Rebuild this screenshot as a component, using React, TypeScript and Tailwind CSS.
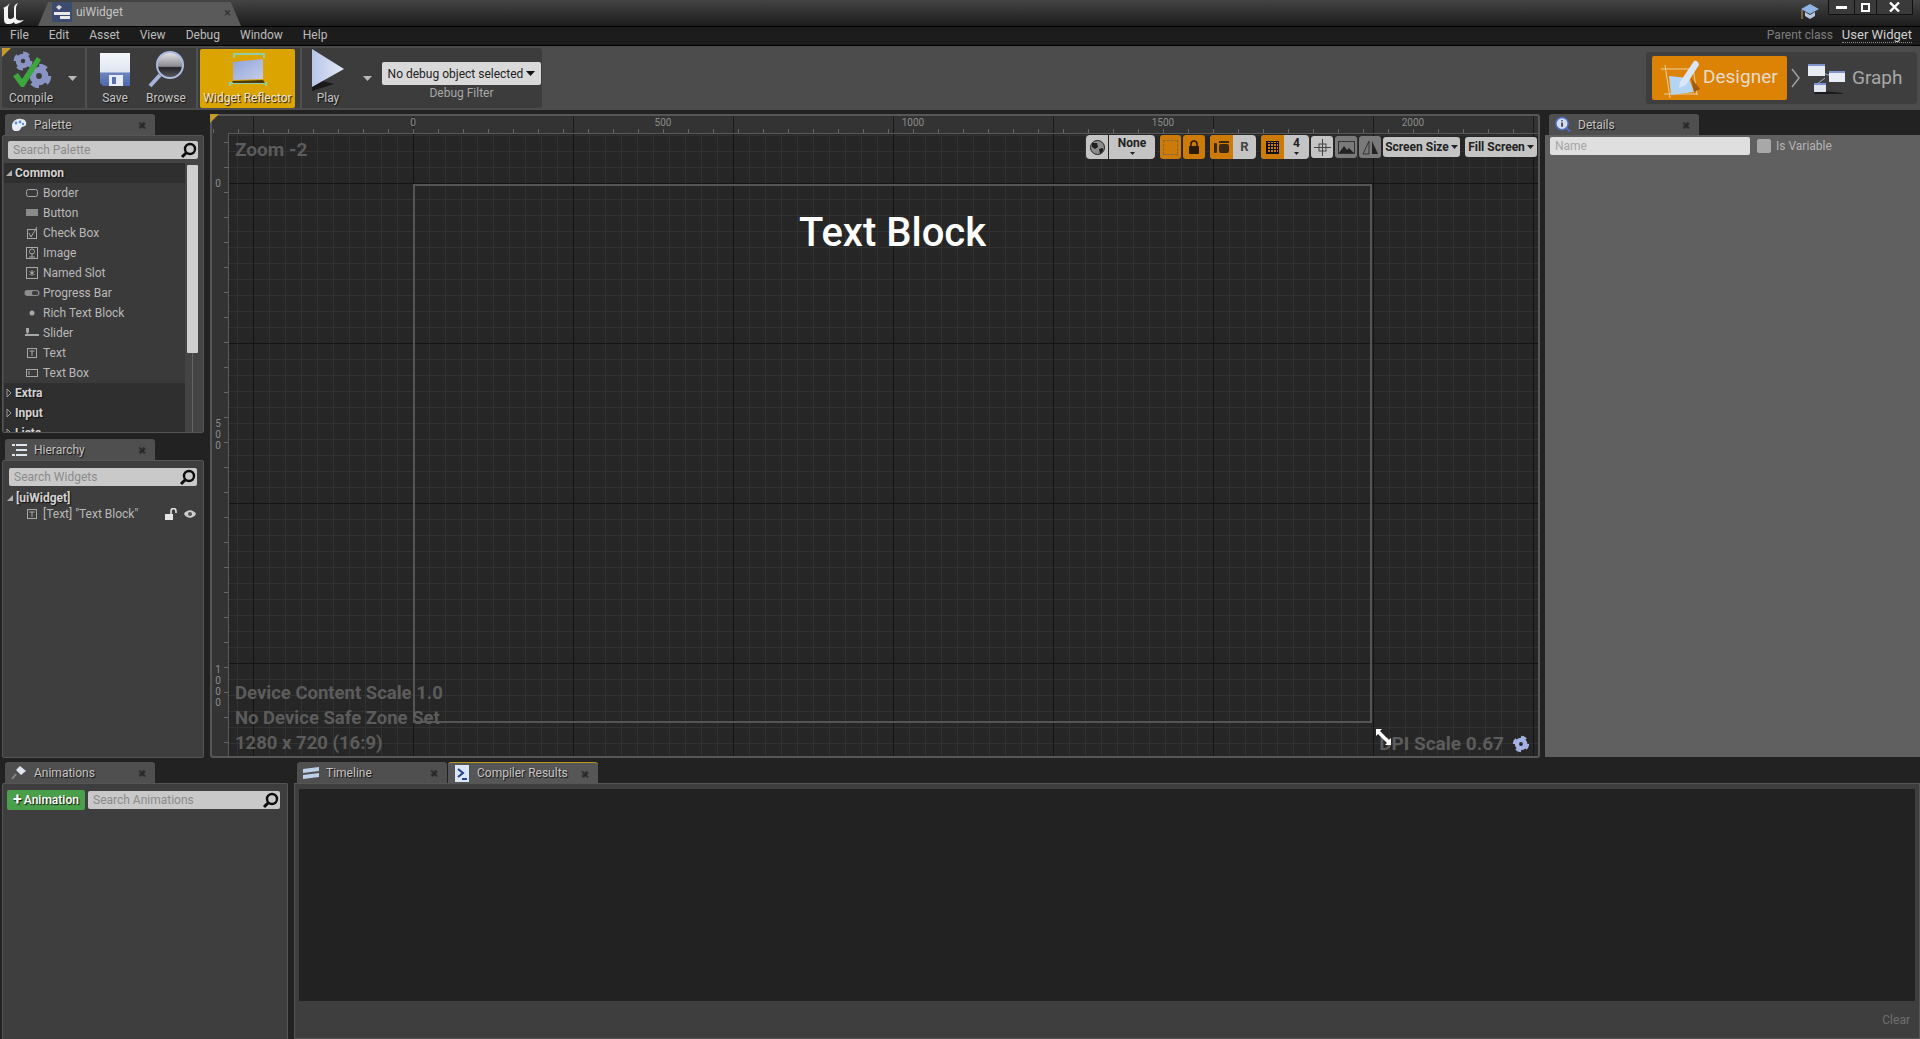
import type { ReactNode } from 'react';

const SHADOW = '[text-shadow:1px_1px_1px_#111]';

function Close() {
  return <span className="ml-auto mr-[10px] text-[13px] leading-none text-[#2e2e2e]">×</span>;
}

function Gear({ x, y, r, color }: { x: number; y: number; r: number; color: string }) {
  return (
    <g>
      <circle cx={x} cy={y} r={r * 0.68} fill="none" stroke={color} strokeWidth={r * 0.72} />
      <circle cx={x} cy={y} r={r * 1.15} fill="none" stroke={color} strokeWidth={r * 0.42} strokeDasharray={`${r * 0.9} ${r * 0.9}`} />
    </g>
  );
}

function UnrealLogo() {
  return (
    <svg width="24" height="23" viewBox="0 0 24 23">
      <path d="M1 6c3-1 5-3 7-5-1 2-2 3-2 5v9c0 2 3 3 5 1l1-1V6c0-2 1-4 4-5-1 2-2 3-2 5v10c0 2 3 3 8 2-2 2-5 3-8 4-1 0-2-1-2-2-2 2-4 2-6 2-3 0-4-2-4-5V8C2 7 2 6 1 6z" fill="#f4f4f4" />
    </svg>
  );
}

function Search({ className = '' }: { className?: string }) {
  return (
    <svg width="17" height="17" viewBox="0 0 17 17" className={className}>
      <circle cx="10" cy="7" r="5" fill="none" stroke="#0c0c0c" strokeWidth="2.4" />
      <path d="M6 11l-4 4" stroke="#0c0c0c" strokeWidth="3" />
    </svg>
  );
}

function SearchBox({ placeholder, className }: { placeholder: string; className: string }) {
  return (
    <div className={`flex h-[18px] items-center justify-between rounded-[2px] bg-[#c9c9c9] pl-[5px] pr-[1px] text-[12px] text-[#8b8b8b] ${className}`}>
      <span>{placeholder}</span>
      <Search />
    </div>
  );
}

function Tab({ label, icon, className = '', active = false }: { label: string; icon: ReactNode; className?: string; active?: boolean }) {
  return (
    <div className={`flex h-[21px] w-[150px] shrink-0 items-center rounded-t-[3px] bg-[#4f4f4f] pl-[6px] text-[12px] text-[#c4c4c4] ${SHADOW} ${active ? 'border-t border-[#b8951f]' : ''} ${className}`}>
      <span className="mr-[7px] flex w-[16px] justify-center">{icon}</span>
      {label}
      <Close />
    </div>
  );
}

function TreeHeader({ label, open = false }: { label: string; open?: boolean }) {
  return (
    <div className={`flex h-[20px] items-center bg-[#2f2f2f] pl-[1px] text-[12px] font-bold text-[#d2d2d2] ${SHADOW}`}>
      {open ? (
        <svg width="8" height="8" viewBox="0 0 8 8" className="mr-[2px]"><path d="M7 1v6H1z" fill="#b0b0b0" /></svg>
      ) : (
        <svg width="8" height="10" viewBox="0 0 8 10" className="mr-[2px]"><path d="M2 1l4 4-4 4z" fill="none" stroke="#999" /></svg>
      )}
      {label}
    </div>
  );
}

const stroke = { fill: 'none', stroke: '#a8a8a8', strokeWidth: 1 };
const paletteItems: { label: string; icon: ReactNode }[] = [
  { label: 'Border', icon: <rect x="2.5" y="4.5" width="11" height="7" rx="2" {...stroke} /> },
  { label: 'Button', icon: <rect x="2" y="4" width="12" height="7" fill="#8a8a8a" /> },
  { label: 'Check Box', icon: <g {...stroke}><rect x="3.5" y="4.5" width="9" height="9" /><path d="M5 8l2 4 6-10" /></g> },
  { label: 'Image', icon: <g {...stroke}><rect x="2.5" y="2.5" width="11" height="11" /><circle cx="8" cy="6.5" r="2.5" /><path d="M8 9v3M5 12h6" /></g> },
  { label: 'Named Slot', icon: <g {...stroke}><rect x="2.5" y="2.5" width="11" height="11" /><path d="M8 5v6M5.5 6.5l5 3M10.5 6.5l-5 3" /></g> },
  { label: 'Progress Bar', icon: <g><rect x="0.5" y="5" width="15" height="6" rx="3" fill="#8c8c8c" /><rect x="8" y="6" width="6" height="4" rx="1.5" fill="#3c3c3c" /></g> },
  { label: 'Rich Text Block', icon: <circle cx="8" cy="8" r="2.5" fill="#a8a8a8" /> },
  { label: 'Slider', icon: <g fill="#a8a8a8"><rect x="1" y="9" width="14" height="2" /><path d="M2 3h3v4L3.5 9 2 7z" /></g> },
  { label: 'Text', icon: <g {...stroke}><rect x="3.5" y="3.5" width="9" height="9" /><path d="M5.5 6h5M8 6v5" /></g> },
  { label: 'Text Box', icon: <g {...stroke}><rect x="2.5" y="4.5" width="11" height="7" /><path d="M5 6v4" /></g> },
];

function PaletteRow({ label, icon }: { label: string; icon: ReactNode }) {
  return (
    <div className="flex h-[20px] items-center bg-[#3a3a3a] pl-[20px] text-[12px] text-[#b9b9b9]">
      <svg width="16" height="16" viewBox="0 0 16 16" className="mr-[3px] shrink-0">{icon}</svg>
      {label}
    </div>
  );
}

function PaletteIcon() {
  return (
    <svg width="16" height="15" viewBox="0 0 16 15">
      <path d="M1 9c0-5 5-8 9-7 4 0 6 3 5 6-1 2-4 1-5 3-1 3-3 3-5 3-3 0-4-2-4-5z" fill="#e6edf6" />
      <circle cx="5" cy="6" r="1.4" fill="#5e8fd8" /><circle cx="9" cy="5" r="1.4" fill="#5e8fd8" /><circle cx="12" cy="7" r="1.2" fill="#5e8fd8" />
    </svg>
  );
}

function ListIcon() {
  return (
    <svg width="16" height="14" viewBox="0 0 16 14" fill="#dfe5ee">
      <rect x="1" y="1" width="3" height="2" /><rect x="5" y="1" width="11" height="2" /><rect x="5" y="6" width="11" height="2" /><rect x="5" y="11" width="11" height="2" /><rect x="1" y="11" width="3" height="2" />
    </svg>
  );
}

function ToolButton({ label, icon, className = '' }: { label: string; icon: ReactNode; className?: string }) {
  return (
    <div className={`flex h-[59px] flex-col items-center justify-between pt-[2px] pb-[2px] text-[12px] text-[#c6c6c6] ${SHADOW} ${className}`}>
      <div className="flex h-[38px] items-center">{icon}</div>
      <span className="whitespace-nowrap">{label}</span>
    </div>
  );
}

function Caret({ className = '' }: { className?: string }) {
  return <svg width="9" height="5" viewBox="0 0 9 5" className={className}><path d="M0 0h9L4.5 5z" fill="currentColor" /></svg>;
}

function Sep() {
  return <div className="mx-[3px] h-[60px] w-[2px] shrink-0 bg-[#505050]" />;
}

function CompileIcon() {
  return (
    <svg width="42" height="40" viewBox="0 0 42 40">
      <Gear x={13} y={11} r={7} color="#8a94c4" />
      <Gear x={29} y={26} r={9} color="#8a94c4" />
      <path d="M3 26l5-3 4 6L27 7l4 3-17 27h-3z" fill="#3ea63e" />
    </svg>
  );
}

function SaveIcon() {
  return (
    <svg width="34" height="38" viewBox="0 0 34 38">
      <defs><linearGradient id="flop" x1="0" x2="0" y1="0" y2="1"><stop offset="0" stopColor="#f4f6fb" /><stop offset="0.58" stopColor="#dfe5f0" /><stop offset="0.6" stopColor="#6d84bf" /><stop offset="1" stopColor="#4f68ac" /></linearGradient></defs>
      <path d="M2 2h30v33H5l-3-3z" fill="url(#flop)" />
      <rect x="11" y="24" width="14" height="11" fill="#e8ecf4" /><rect x="14" y="26" width="4" height="7" fill="#5a70b0" />
    </svg>
  );
}

function BrowseIcon() {
  return (
    <svg width="38" height="40" viewBox="0 0 38 40">
      <defs><linearGradient id="lens" x1="0" x2="0" y1="0" y2="1"><stop offset="0" stopColor="#e6e6ea" /><stop offset="0.55" stopColor="#8c8c92" /><stop offset="0.6" stopColor="#26262a" /><stop offset="1" stopColor="#5a5a60" /></linearGradient></defs>
      <circle cx="23" cy="15" r="13" fill="url(#lens)" stroke="#aebbe0" strokeWidth="2" />
      <path d="M13 25L3 36" stroke="#a6b4dc" strokeWidth="4" />
    </svg>
  );
}

function ReflectorIcon() {
  return (
    <svg width="42" height="38" viewBox="0 0 42 38">
      <defs><linearGradient id="refl" x1="0" x2="1" y1="0" y2="1"><stop offset="0" stopColor="#8fa3dc" /><stop offset="1" stopColor="#c6cde8" /></linearGradient></defs>
      <path d="M7 7V3h30v4M3 35v-3h36v3" fill="none" stroke="#8fd0a4" strokeWidth="2" />
      <path d="M6 11l30-3v20l-30 1z" fill="url(#refl)" />
      <path d="M5 30l31-1 2 3H6z" fill="#4f3a0a" />
    </svg>
  );
}

function PlayIcon() {
  return (
    <svg width="36" height="44" viewBox="0 0 36 44">
      <defs><linearGradient id="play" x1="0" x2="1" y1="0" y2="0"><stop offset="0" stopColor="#b8c6e8" /><stop offset="1" stopColor="#e3e9f6" /></linearGradient></defs>
      <path d="M2 30l22 6-22 7z" fill="#1a1a1a" />
      <path d="M2 1l32 20L2 39z" fill="url(#play)" />
    </svg>
  );
}

function DesignerIcon() {
  return (
    <svg width="42" height="40" viewBox="0 0 42 40">
      <path d="M3 11h34M6 36h34M7 7l5 33M35 9l4 28" stroke="#e9cfa0" strokeWidth="1" fill="none" />
      <path d="M11 18l20 2 5 14-23 3z" fill="#b5d4f2" />
      <path d="M36 34l6-3-9-11z" fill="#9c5c08" />
      <path d="M22 24L36 3c2-1 5 1 5 4L28 27l-7 3z" fill="#d8e6f7" />
    </svg>
  );
}

function GraphIcon() {
  return (
    <svg width="40" height="32" viewBox="0 0 40 32">
      <path d="M8 8l16 6M10 22l8-6" stroke="#9db0da" />
      <path d="M6 28l30 3-1 1H8z" fill="#1b1b1b" />
      <rect x="1" y="2" width="17" height="12" fill="#e8ecf5" /><rect x="1" y="2" width="17" height="2" fill="#7e93d0" />
      <rect x="22" y="9" width="16" height="11" fill="#e8ecf5" /><rect x="22" y="9" width="16" height="2" fill="#7e93d0" />
      <rect x="7" y="21" width="12" height="9" fill="#dfe4f0" /><rect x="7" y="21" width="12" height="2" fill="#7e93d0" />
    </svg>
  );
}

function TitleBar() {
  return (
    <div className="flex h-[26px] items-end bg-[linear-gradient(#444444,#1c1c1c)]">
      <div className="ml-[1px] flex h-[26px] w-[37px] items-center pl-[1px]"><UnrealLogo /></div>
      <div className="flex h-[24px] w-[203px] items-center rounded-t-[6px] bg-[#5a5a5a] pb-[4px] pl-[14px] text-[12px] text-[#c4c4c4] [clip-path:polygon(5%_0,95%_0,100%_100%,0_100%)]">
        <svg width="20" height="20" viewBox="0 0 20 20" className="mr-[4px]">
          <rect width="20" height="20" fill="#3c4c70" /><rect x="2" y="10" width="16" height="3" fill="#e8e8e8" /><rect x="8" y="14" width="10" height="3" fill="#e8e8e8" /><path d="M4 5l3-2 3 2-3 3z" fill="#d8d8d8" />
        </svg>
        uiWidget
        <Close />
      </div>
      <div className="ml-auto flex h-[26px] items-start">
        <svg width="20" height="18" viewBox="0 0 20 18" className="mr-[8px] mt-[3px]">
          <path d="M1 6l9-5 9 5-9 5z" fill="#8fb4e4" /><path d="M5 9v4l5 3 5-3V9l-5 3z" fill="#b6c8e0" /><path d="M2 7v9" stroke="#c89a4e" />
        </svg>
        <div className="flex h-[15px] overflow-hidden rounded-b-[2px] border border-t-0 border-[#111]">
          <div className="flex w-[26px] items-center justify-center border-r border-[#111] bg-[#3a3a3a]"><span className="h-[3px] w-[11px] bg-white" /></div>
          <div className="flex w-[22px] items-center justify-center border-r border-[#111] bg-[#3a3a3a]"><span className="h-[9px] w-[9px] border-2 border-white" /></div>
          <div className="flex w-[35px] items-center justify-center bg-[#3a3a3a]">
            <svg width="11" height="10" viewBox="0 0 11 10"><path d="M1 0.5l9 9M10 0.5l-9 9" stroke="#fff" strokeWidth="2.4" /></svg>
          </div>
        </div>
        <div className="w-[7px]" />
      </div>
    </div>
  );
}

const MENU = ['File', 'Edit', 'Asset', 'View', 'Debug', 'Window', 'Help'];

function MenuBar() {
  return (
    <div className="flex h-[20px] items-center gap-[20px] border-y border-black bg-[#1c1c1c] pb-[2px] pl-[10px] text-[12px] text-[#bcbcbc]">
      {MENU.map((m) => (
        <span key={m}>{m}</span>
      ))}
      <span className="ml-auto text-[#7f7f7f]">Parent class</span>
      <span className="-ml-[11px] mr-[8px] border-b border-dotted border-[#888] text-[13px] leading-[14px] text-[#d0d0d0]">User Widget</span>
    </div>
  );
}

function Toolbar() {
  return (
    <div className="relative flex h-[64px] items-center bg-[#4c4c4c] pl-[2px] pr-[3px]">
      <div className="relative flex h-[60px] w-[540px] items-center rounded-[3px] bg-[#3c3c3c] pl-[8px]">
        <span className="absolute left-0 top-0 border-b-[9px] border-l-[9px] border-t-0 border-r-0 border-b-transparent border-l-[#c49a2c]" />
        <ToolButton label="Compile" icon={<CompileIcon />} className="w-[42px]" />
        <Caret className="ml-[16px] mr-[5px] text-[#b8b8b8]" />
        <Sep />
        <ToolButton label="Save" icon={<SaveIcon />} className="ml-[8px] w-[34px]" />
        <ToolButton label="Browse" icon={<BrowseIcon />} className="ml-[15px] w-[38px]" />
        <div className="ml-[8px]"><Sep /></div>
        <ToolButton label="Widget Reflector" icon={<ReflectorIcon />} className="-ml-[1px] w-[95px] rounded-[2px] bg-[#dca400] text-[#f0e6d0]" />
        <div className="ml-[2px]"><Sep /></div>
        <ToolButton label="Play" icon={<PlayIcon />} className="ml-[5px] w-[36px]" />
        <Caret className="ml-[17px] text-[#b8b8b8]" />
        <div className="ml-[10px] flex h-[60px] flex-col items-center pt-[14px]">
          <div className="flex h-[23px] w-[159px] shrink-0 items-center justify-center gap-[3px] rounded-[2px] bg-[#d9d9d9] text-[12px] text-[#222]">
            No debug object selected
            <Caret className="text-[#111]" />
          </div>
          <span className="-mt-[1px] text-[12px] text-[#a8a8a8]">Debug Filter</span>
        </div>
      </div>
      <div className="ml-auto flex h-[52px] w-[271px] items-center rounded-[3px] bg-[#3e3e3e] pl-[6px]">
        <div className="flex h-[44px] w-[135px] items-center rounded-[2px] bg-[#dc8205] pb-[1px] pl-[6px] text-[19px] text-[#e8dcc8]">
          <DesignerIcon />
          <span className="ml-[3px]">Designer</span>
        </div>
        <svg width="12" height="24" viewBox="0 0 12 24" className="ml-[3px]"><path d="M2 3l7 9-7 9" fill="none" stroke="#a0a0a0" strokeWidth="1.5" /></svg>
        <div className="ml-[5px]"><GraphIcon /></div>
        <span className="ml-[5px] text-[19px] text-[#a8a8a8]">Graph</span>
      </div>
    </div>
  );
}

function PalettePanel() {
  return (
    <div className="flex flex-col">
      <Tab label="Palette" icon={<PaletteIcon />} className="ml-[3px]" />
      <div className="flex h-[298px] flex-col overflow-hidden rounded-[2px] border border-[#555] bg-[#444] px-[1px] pt-[5px]">
        <SearchBox placeholder="Search Palette" className="mx-[4px]" />
        <div className="mt-[4px] flex min-h-0 flex-1 pr-[4px]">
          <div className="flex-1 overflow-hidden">
            <TreeHeader label="Common" open />
            {paletteItems.map((p) => (
              <PaletteRow key={p.label} {...p} />
            ))}
            <TreeHeader label="Extra" />
            <TreeHeader label="Input" />
            <TreeHeader label="Lists" />
          </div>
          <div className="relative ml-[2px] w-[11px] shrink-0 pt-[2px]">
            <div className="h-[188px] rounded-[1px] bg-[#cfcfcf]" />
            <div className="mx-auto h-[80px] w-[1px] bg-[#666]" />
          </div>
        </div>
      </div>
    </div>
  );
}

function HierarchyPanel() {
  return (
    <div className="mt-[6px] flex flex-col">
      <Tab label="Hierarchy" icon={<ListIcon />} className="ml-[3px]" />
      <div className="h-[298px] rounded-[2px] border border-[#555] bg-[#3e3e3e] pt-[7px] text-[12px]">
        <SearchBox placeholder="Search Widgets" className="mx-[6px]" />
        <div className={`mt-[3px] flex h-[18px] items-center pl-[3px] font-bold text-[#d2d2d2] ${SHADOW}`}>
          <svg width="8" height="8" viewBox="0 0 8 8" className="mr-[2px]"><path d="M7 1v6H1z" fill="#b0b0b0" /></svg>
          [uiWidget]
        </div>
        <div className="flex h-[14px] items-center pl-[21px] text-[#b9b9b9]">
          <svg width="16" height="16" viewBox="0 0 16 16" className="mr-[3px]">{paletteItems[8].icon}</svg>
          [Text] "Text Block"
          <svg width="14" height="13" viewBox="0 0 14 13" className="ml-auto">
            <rect x="1" y="6" width="8" height="6" fill="#e4e4e4" /><path d="M7 6V3a2.5 2.5 0 015 0v2" fill="none" stroke="#e4e4e4" strokeWidth="1.5" />
          </svg>
          <svg width="14" height="10" viewBox="0 0 14 10" className="ml-[5px] mr-[6px]">
            <path d="M1 5c3-5 9-5 12 0-3 5-9 5-12 0z" fill="#cfcfcf" /><circle cx="7" cy="5" r="2" fill="#555" />
          </svg>
        </div>
      </div>
    </div>
  );
}

function CanvasButton({ children, className = '' }: { children: ReactNode; className?: string }) {
  return <div className={`flex items-center justify-center rounded-[3px] ${className}`}>{children}</div>;
}

function CanvasToolbar() {
  return (
    <div className="absolute right-[1px] top-[1px] flex items-center text-[#222]">
      <div className="flex h-[24px] overflow-hidden rounded-[4px] bg-[#c4c4c4]">
        <div className="flex w-[23px] items-center justify-center border-r border-[#222]">
          <svg width="17" height="17" viewBox="0 0 17 17">
            <circle cx="8.5" cy="8.5" r="7" fill="#8c8c8c" stroke="#1f1f1f" />
            <path d="M3 4l5 0 1 4-3 2-3-2zM10 10l4-1 0 3-3 3z" fill="#1f1f1f" />
          </svg>
        </div>
        <div className="flex w-[46px] flex-col items-center text-[12px] font-bold leading-[17px]">
          None
          <Caret className="h-[3px] w-[5px]" />
        </div>
      </div>
      <CanvasButton className="ml-[5px] h-[24px] w-[21px] bg-[#cc7a08]">
        <span className="h-[15px] w-[15px] border border-dashed border-[#8a6a3a]" />
      </CanvasButton>
      <CanvasButton className="ml-[2px] h-[24px] w-[22px] bg-[#cc7a08]">
        <svg width="12" height="14" viewBox="0 0 12 14"><rect x="1" y="6" width="10" height="8" rx="1" fill="#2a1a08" /><path d="M3 6V4a3 3 0 016 0v2" fill="none" stroke="#2a1a08" strokeWidth="1.5" /></svg>
      </CanvasButton>
      <div className="ml-[5px] flex h-[24px] overflow-hidden rounded-[4px] bg-[#c4c4c4]">
        <div className="flex w-[23px] items-center justify-center bg-[#cc7a08]">
          <svg width="15" height="13" viewBox="0 0 15 13" fill="#3a2a14"><rect x="0" y="2" width="3" height="10" rx="1" /><rect x="5" y="0" width="10" height="2" /><rect x="5" y="3" width="10" height="9" rx="2" /></svg>
        </div>
        <div className="flex w-[23px] items-center justify-center text-[13px] font-bold text-[#444]">R</div>
      </div>
      <div className="ml-[5px] flex h-[24px] overflow-hidden rounded-[4px] bg-[#c4c4c4]">
        <div className="flex w-[23px] items-center justify-center bg-[#cc7a08]">
          <span className="h-[13px] w-[13px] border border-[#111] bg-[repeating-linear-gradient(0deg,#111_0,#111_1px,transparent_1px,transparent_3px),repeating-linear-gradient(90deg,#111_0,#111_1px,transparent_1px,transparent_3px)]" />
        </div>
        <div className="flex w-[25px] flex-col items-center text-[12px] font-bold leading-[17px]">
          4
          <Caret className="h-[3px] w-[5px]" />
        </div>
      </div>
      <CanvasButton className="ml-[2px] h-[22px] w-[22px] bg-[#c4c4c4]">
        <svg width="17" height="17" viewBox="0 0 17 17" fill="none" stroke="#444"><rect x="5" y="5" width="7" height="7" /><path d="M8.5 0v17M0 8.5h17" /></svg>
      </CanvasButton>
      <CanvasButton className="ml-[2px] h-[22px] w-[22px] bg-[#7a7a7a]">
        <svg width="17" height="13" viewBox="0 0 17 13"><rect x="0.5" y="0.5" width="16" height="12" fill="none" stroke="#333" /><path d="M1 12l5-7 3 4 2-2 5 5z" fill="#222" /></svg>
      </CanvasButton>
      <CanvasButton className="ml-[2px] h-[22px] w-[22px] bg-[#7a7a7a]">
        <svg width="17" height="15" viewBox="0 0 17 15"><path d="M7 1v13H1z" fill="none" stroke="#333" /><path d="M10 1v13h6z" fill="#222" /></svg>
      </CanvasButton>
      <CanvasButton className="ml-[2px] h-[20px] w-[77px] gap-[2px] bg-[#c4c4c4] text-[12px] font-bold">
        Screen Size
        <Caret className="h-[4px] w-[7px]" />
      </CanvasButton>
      <CanvasButton className="ml-[5px] h-[20px] w-[72px] gap-[2px] bg-[#c4c4c4] text-[12px] font-bold">
        Fill Screen
        <Caret className="h-[4px] w-[7px]" />
      </CanvasButton>
    </div>
  );
}

function DesignerPanel() {
  return (
    <div className="relative ml-[6px] flex h-[644px] w-[1330px] flex-col rounded-[3px] border-2 border-[#575757] bg-[#333333] text-[#8c8c8c]">
      <span className="absolute -left-[2px] -top-[2px] border-b-[9px] border-l-[9px] border-b-transparent border-l-[#c49a2c]" />
      {/* top ruler */}
      <div className="flex h-[17px] shrink-0 flex-col bg-[linear-gradient(90deg,#1a1a1a_1px,transparent_1px)] bg-[size:160px_100%] bg-[position:41px_0]">
        <div className="flex h-[13px] items-center pl-[76px] pt-[1px] text-[10px]">
          {['0', '500', '1000', '1500', '2000'].map((n) => (
            <span key={n} className="w-[250px] shrink-0 text-center leading-[12px]">{n}</span>
          ))}
        </div>
        <div className="h-[4px] bg-[linear-gradient(90deg,#666666_1px,transparent_1px)] bg-[size:25px_100%] bg-[position:1px_0]" />
      </div>
      <div className="flex min-h-0 flex-1">
        {/* left ruler */}
        <div className="flex w-[16px] shrink-0">
          <div className="flex w-[12px] flex-col items-center pt-[45px] text-[10px] leading-[11px]">
            <span>0</span>
            <span className="mt-[229px]">5</span><span>0</span><span>0</span>
            <span className="mt-[213px]">1</span><span>0</span><span>0</span><span>0</span>
          </div>
          <div className="w-[4px] bg-[linear-gradient(#666666_1px,transparent_1px)] bg-[size:100%_25px] bg-[position:0_9px]" />
        </div>
        <div className="relative flex-1 overflow-hidden border-l border-t border-[#5a5a5a] bg-[#262626] bg-[linear-gradient(90deg,#141414_1px,transparent_1px),linear-gradient(#141414_1px,transparent_1px),linear-gradient(90deg,#323232_1px,transparent_1px),linear-gradient(#323232_1px,transparent_1px)] bg-[size:160px_160px,160px_160px,16px_16px,16px_16px] bg-[position:24px_49px,24px_49px,8px_1px,8px_1px]">
          <CanvasToolbar />
          {/* artboard */}
          <div className="absolute left-[184px] top-[50px] flex h-[539px] w-[959px] justify-center border-2 border-[#555555] pt-[22px]">
            <span className="text-[40px] font-medium leading-[50px] text-white">Text Block</span>
          </div>
          <div className="absolute left-[6px] top-[2px] text-[19px] font-bold text-[#5c5c5c]">Zoom -2</div>
          <div className="absolute bottom-0 left-[6px] text-[18.5px] font-bold leading-[25px] text-[#5c5c5c]">
            <div>Device Content Scale 1.0</div>
            <div>No Device Safe Zone Set</div>
            <div>1280 x 720 (16:9)</div>
          </div>
          <div className="absolute bottom-0 right-[8px] flex items-center text-[19px] font-bold leading-[25px] text-[#5c5c5c]">
            DPI Scale 0.67
            <svg width="18" height="18" viewBox="0 0 18 18" className="ml-[8px]">
              <Gear x={9} y={9} r={6} color="#a4b2e4" />
            </svg>
          </div>
          {/* resize cursor */}
          <svg width="20" height="20" viewBox="0 0 20 20" className="absolute bottom-[9px] right-[144px]">
            <path d="M2 2h6L6 4l9 9 2-2v7h-6l2-2-9-9-2 2z" fill="#fff" />
          </svg>
        </div>
      </div>
    </div>
  );
}

function DetailsPanel() {
  return (
    <div className="ml-[5px] flex flex-1 flex-col">
      <Tab
        label="Details"
        className="ml-[4px]"
        icon={
          <svg width="17" height="17" viewBox="0 0 17 17">
            <circle cx="7.5" cy="7.5" r="6.5" fill="#d4dcf0" stroke="#4a70c4" strokeWidth="1.6" />
            <path d="M12 12l4 4" stroke="#4a70c4" strokeWidth="2" /><path d="M7.5 4v1M7.5 6.5V11" stroke="#222" strokeWidth="1.6" />
          </svg>
        }
      />
      <div className="h-[622px] bg-[#606060] pl-[5px] pt-[2px] text-[12px]">
        <div className="flex items-center">
          <div className="flex h-[18px] w-[200px] items-center rounded-[2px] bg-[#dfdfdf] pl-[5px] text-[#a6a6a6]">Name</div>
          <span className="ml-[7px] mr-[5px] h-[14px] w-[14px] rounded-[2px] bg-[#a8a8a8]" />
          <span className="text-[#b4b4b4]">Is Variable</span>
        </div>
      </div>
    </div>
  );
}

function BottomRow() {
  return (
    <div className="mt-[4px] flex h-[277px]">
      <div className="ml-[2px] flex w-[286px] flex-col">
        <Tab
          label="Animations"
          className="ml-[3px]"
          icon={
            <svg width="16" height="16" viewBox="0 0 16 16"><path d="M9 1l6 5-5 4-5-5z" fill="#dfe5ee" /><path d="M5 9l-4 5" stroke="#888" strokeWidth="2" /></svg>
          }
        />
        <div className="flex-1 rounded-t-[2px] border border-b-0 border-[#555] bg-[#3e3e3e] pl-[4px] pt-[6px]">
          <div className="flex items-center">
            <div className={`flex h-[20px] w-[78px] items-center justify-center rounded-[2px] bg-[#4aa04a] text-[12px] font-medium text-white ${SHADOW}`}>
              <span className="mr-[2px] text-[16px] font-bold leading-none">+</span>Animation
            </div>
            <SearchBox placeholder="Search Animations" className="ml-[3px] w-[192px]" />
          </div>
        </div>
      </div>
      <div className="ml-[6px] flex flex-1 flex-col">
        <div className="flex pl-[3px]">
          <Tab
            label="Timeline"
            icon={<svg width="16" height="12" viewBox="0 0 16 12"><path d="M0 2l16-2v4L0 6zM0 8l16-2v4L0 12z" fill="#bcd0ea" /></svg>}
          />
          <Tab
            label="Compiler Results"
            active
            className="ml-[1px] bg-[#565656]"
            icon={<svg width="14" height="17" viewBox="0 0 14 17"><rect width="14" height="17" fill="#dbe6f7" /><path d="M3 4l5 4-5 4M7 14h5" fill="none" stroke="#24408c" strokeWidth="2" /></svg>}
          />
        </div>
        <div className="flex flex-1 flex-col border border-[#555] bg-[#3e3e3e] px-[4px] pt-[5px]">
          <div className="h-[212px] bg-[#222222]" />
          <div className="flex flex-1 items-center justify-end pr-[5px] text-[12px] text-[#6e6e6e]">Clear</div>
        </div>
      </div>
    </div>
  );
}

export default function App() {
  return (
    <div className="flex h-[1039px] w-[1920px] flex-col overflow-hidden bg-[#222222] font-['Roboto',sans-serif]">
      <TitleBar />
      <MenuBar />
      <Toolbar />
      <div className="mt-[4px] flex">
        <div className="ml-[2px] w-[202px]">
          <PalettePanel />
          <HierarchyPanel />
        </div>
        <DesignerPanel />
        <DetailsPanel />
      </div>
      <BottomRow />
    </div>
  );
}
